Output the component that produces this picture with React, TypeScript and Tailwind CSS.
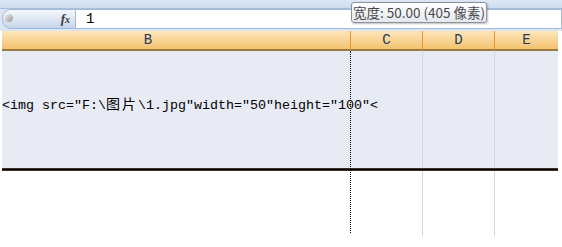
import React from 'react';

const mono = { fontFamily: '"Liberation Mono", "Noto Sans CJK SC", monospace' };

function Cjk({ ch }: { ch: string }) {
  return (
    <span className="inline-block w-[16px] text-[14px]" style={{ fontFamily: '"Noto Sans CJK SC", sans-serif' }}>
      {ch}
    </span>
  );
}

export default function App() {
  return (
    <div className="relative w-[562px] h-[247px] overflow-hidden bg-white">
      {/* ribbon bottom */}
      <div className="h-[9px] bg-gradient-to-b from-[#dde8f5] to-[#cfdcee] border-b border-[#a8bfdc]" />

      {/* formula bar */}
      <div className="flex h-[20px] pl-[2px] bg-[#dbe5f3]">
        <div className="relative flex w-[74px] items-center justify-end rounded-l-[9px] border border-[#a3b9d6] bg-gradient-to-b from-[#f4f8fd] via-[#dfe8f5] to-[#c5d5ea] pr-[5px]">
          <span className="absolute left-[2px] top-[4px] h-[8px] w-[8px] rounded-full bg-gradient-to-br from-[#eeeeee] to-[#9a9a9a]" />
          <span className="text-[13px] font-bold italic text-[#3a3a3a]" style={{ fontFamily: '"Liberation Serif", serif' }}>
            f<span className="text-[10px]">x</span>
          </span>
        </div>
        <div className="flex flex-1 items-center border-y border-r border-[#a3b9d6] bg-white pl-[10px] text-[14px] text-black" style={mono}>
          1
        </div>
      </div>

      <div className="h-[2px] bg-[#dbe5f3]" />

      {/* column headers */}
      <div className="flex h-[20px] pl-[2px] text-[14px] text-[#1f3a5a]" style={mono}>
        <div className="flex w-[349px] items-center justify-center border-r border-b-2 border-r-[#f29436] border-b-[#9c7a44] bg-gradient-to-b from-[#fce6bb] to-[#f3c36c] pr-[56px]">B</div>
        <div className="flex w-[72px] items-center justify-center border-r border-b-2 border-r-[#f29436] border-b-[#9c7a44] bg-gradient-to-b from-[#fce6bb] to-[#f3c36c]">C</div>
        <div className="flex w-[72px] items-center justify-center border-r border-b-2 border-r-[#f29436] border-b-[#9c7a44] bg-gradient-to-b from-[#fce6bb] to-[#f3c36c]">D</div>
        <div className="flex w-[63px] items-center justify-center border-b-2 border-b-[#9c7a44] bg-gradient-to-b from-[#fce6bb] to-[#f3c36c]">E</div>
      </div>

      {/* selected row */}
      <div className="flex h-[117px] pl-[2px]">
        <div className="relative z-10 flex w-[349px] items-center whitespace-nowrap bg-[#e8ebf4] pb-[10px] text-[13.33px] text-black" style={mono}>
          <span>
            &lt;img src="F:\<Cjk ch="图" /><Cjk ch="片" />\1.jpg"width="50"height="100"&lt;
          </span>
        </div>
        <div className="w-[72px] border-r border-[#d0d9e8] bg-[#e8ebf4]" />
        <div className="w-[72px] border-r border-[#d0d9e8] bg-[#e8ebf4]" />
        <div className="w-[63px] bg-[#e8ebf4]" />
      </div>
      <div className="ml-[2px] w-[556px] h-[3px] border-y border-[#3b3226] bg-black" />

      {/* next row */}
      <div className="flex h-[65px] pl-[2px]">
        <div className="w-[349px]" />
        <div className="w-[72px] border-r border-[#cdd8ea]" />
        <div className="w-[72px] border-r border-[#cdd8ea]" />
        <div className="w-[63px]" />
      </div>

      {/* column resize guide */}
      <div className="absolute z-20 left-[350px] top-[51px] h-[182px] border-l border-dotted border-black" />

      {/* tooltip */}
      <div className="absolute z-30 left-[351px] top-[2px] flex h-[21px] w-[136px] items-center justify-center rounded-[3px] border border-[#8d929a] bg-gradient-to-b from-white to-[#e4e8ef] text-[13.5px] text-[#4a4a4a] shadow-[1px_1px_2px_rgba(0,0,0,0.25)]" style={{ fontFamily: '"Noto Sans CJK SC", "Noto Sans", sans-serif' }}>
        宽度: 50.00 (405 像素)
      </div>
    </div>
  );
}
